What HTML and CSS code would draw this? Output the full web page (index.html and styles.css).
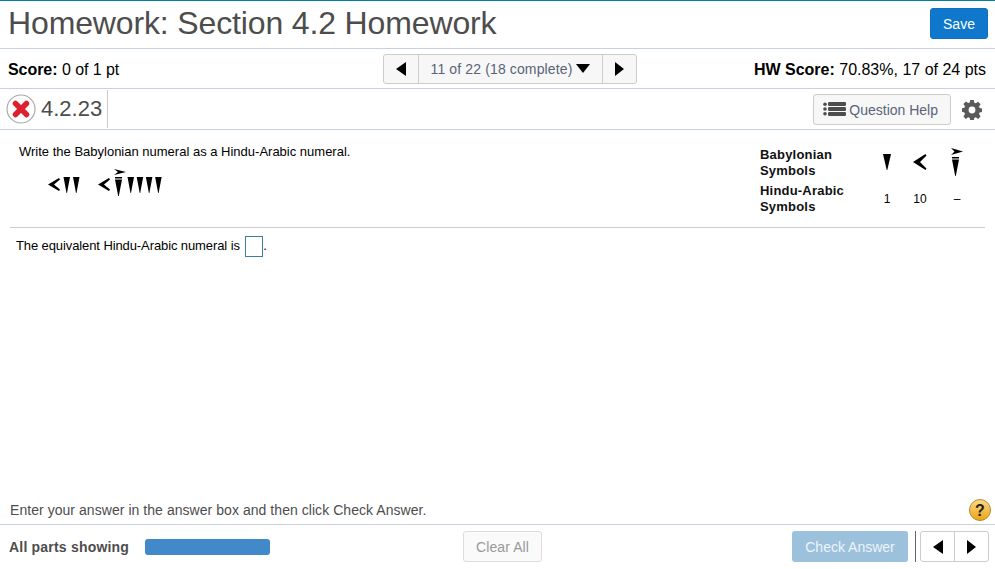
FILE: index.html
```html
<!DOCTYPE html>
<html lang="en">
<head>
<meta charset="utf-8">
<title>Homework: Section 4.2 Homework</title>
<link rel="stylesheet" href="styles.css">
</head>
<body>
<div class="page">
  <header class="title-bar">
    <h1 class="title">Homework: Section 4.2 Homework</h1>
    <button class="btn-save">Save</button>
  </header>
  <div class="score-bar">
    <div class="score"><b>Score:</b> 0 of 1 pt</div>
    <div class="pager">
      <span class="pager-arrow"><svg width="10" height="14" viewBox="0 0 10 14"><path d="M10 0V14L0 7Z"/></svg></span>
      <span class="pager-mid">11 of 22 (18 complete)<svg width="14" height="9" viewBox="0 0 14 9"><path d="M0 0H14L7 9Z"/></svg></span>
      <span class="pager-arrow pager-arrow-next"><svg width="9" height="14" viewBox="0 0 9 14"><path d="M0 0V14L9 7Z"/></svg></span>
    </div>
    <div class="hw-score"><b>HW Score:</b> 70.83%, 17 of 24 pts</div>
  </div>
  <div class="question-bar">
    <div class="q-id">
      <svg width="30" height="30" viewBox="0 0 30 30">
        <circle cx="15" cy="15" r="14" fill="#fff" stroke="#aaa" stroke-width="1.2"/>
        <path d="M9.500 9.500L20.500 20.500M20.500 9.500L9.500 20.500" stroke="#dd2030" stroke-width="5.500" stroke-linecap="round"/>
      </svg>
      <span class="q-num">4.2.23</span>
    </div>
    <div class="q-tools">
      <button class="btn-help">
        <svg width="23" height="14" viewBox="0 0 23 14" fill="#4d4d4d"><circle cx="2" cy="2.200" r="1.800"/><circle cx="2" cy="7" r="1.800"/><circle cx="2" cy="11.800" r="1.800"/><rect x="5" y="0" width="18" height="4" rx="1.200"/><rect x="5" y="5" width="18" height="4" rx="1.200"/><rect x="5" y="10" width="18" height="4" rx="1.200"/></svg>
        <span class="help-label">Question Help</span>
      </button>
      <svg class="gear" width="20" height="20" viewBox="0 0 20 20"><path fill="#5a5a5a" fill-rule="evenodd" d="M8.200 0h3.600l.5 2.700 1.500.6 2.300-1.600 2.500 2.500-1.600 2.300.6 1.500 2.400.5v3.600l-2.400.5-.6 1.500 1.600 2.300-2.500 2.500-2.300-1.600-1.500.6-.5 2.600H8.200l-.5-2.600-1.500-.6-2.300 1.600-2.500-2.500 1.600-2.300-.6-1.500L0 11.800V8.200l2.400-.5.6-1.500L1.400 3.900l2.500-2.500 2.300 1.600 1.500-.6zM10 6.600a3.400 3.400 0 1 0 0 6.800 3.400 3.400 0 0 0 0-6.800z"/></svg>
    </div>
  </div>
  <main class="content">
    <section class="prompt">
      <div class="prompt-left">
        <p class="prompt-text">Write the Babylonian numeral as a Hindu-Arabic numeral.</p>
        <svg class="numeral" width="120" height="31" viewBox="0 0 120 31">
          <defs>
            <path id="one" d="M0 0H6.500L3.500 16H3Z"/>
            <path id="ten" d="M11 0L12 1.500 6 6.500 12 11.500 11 13 0 6.500Z"/>
          </defs>
          <use href="#ten" x="2" y="11"/>
          <use href="#one" x="17.500" y="10"/>
          <use href="#one" x="27" y="10"/>
          <use href="#ten" x="52" y="11"/>
          <path d="M68 2L80 5 68 8 72 5ZM69 10H76V11.500H69ZM69 12.500H76L72.800 29H72.200Z"/>
          <use href="#one" x="81.500" y="10"/>
          <use href="#one" x="90.700" y="10"/>
          <use href="#one" x="99.900" y="10"/>
          <use href="#one" x="109.100" y="10"/>
        </svg>
      </div>
      <div class="legend">
        <div class="legend-label">Babylonian<br>Symbols</div>
        <svg class="glyph" width="8" height="16" viewBox="0 0 8 16"><path d="M0 0H8L4.300 16H3.700Z"/></svg>
        <svg class="glyph" width="14" height="16" viewBox="0 0 14 16"><path d="M12.500 0L13.500 1.500 7 8 13.500 14.500 12.500 16 0 8Z"/></svg>
        <svg class="glyph" width="12" height="28" viewBox="0 0 12 28"><path d="M0 0L12 3.500 0 7 3.500 3.500ZM1 9H8V10.500H1ZM1 11.500H8L4.800 28H4.200Z"/></svg>
        <div class="legend-label">Hindu-Arabic<br>Symbols</div>
        <div class="legend-val">1</div>
        <div class="legend-val">10</div>
        <div class="legend-val">–</div>
      </div>
    </section>
    <p class="answer">The equivalent Hindu-Arabic numeral is <span class="answer-box"></span>.</p>
  </main>
  <div class="hint-bar">
    <span>Enter your answer in the answer box and then click Check Answer.</span>
    <svg width="22" height="22" viewBox="0 0 22 22">
      <defs><linearGradient id="gold" x1="0" y1="0" x2="0" y2="1"><stop offset="0" stop-color="#fbd98a"/><stop offset="1" stop-color="#eca414"/></linearGradient></defs>
      <circle cx="11" cy="11" r="10.500" fill="url(#gold)" stroke="#b98a2a"/>
      <text x="11" y="16.500" text-anchor="middle" class="help-q">?</text>
    </svg>
  </div>
  <footer class="foot">
    <div class="parts"><b>All parts showing</b><span class="progress"></span></div>
    <button class="btn-clear">Clear All</button>
    <div class="foot-right">
      <button class="btn-check">Check Answer</button>
      <span class="foot-sep"></span>
      <div class="mini-pager">
        <span class="mini-arrow"><svg width="10" height="14" viewBox="0 0 10 14"><path d="M10 0V14L0 7Z"/></svg></span>
        <span class="mini-arrow"><svg width="9" height="14" viewBox="0 0 9 14"><path d="M0 0V14L9 7Z"/></svg></span>
      </div>
    </div>
  </footer>
</div>
</body>
</html>
```
FILE: styles.css
```css
* { box-sizing: border-box; }
html, body { margin: 0; padding: 0; }
body { font-family: "Liberation Sans", Arial, sans-serif; color: #000; background: #fff; overflow: hidden; }
button { font-family: inherit; cursor: pointer; }
p { margin: 0; }
.page { width: 995px; height: 569px; display: flex; flex-direction: column; border-top: 1px solid #007fa3; }
.title-bar { height: 48px; display: flex; align-items: center; justify-content: space-between; padding: 0 7px 2px 8px; border-bottom: 1px solid #c9d0e0; flex: none; }
.title { margin: 0 0 2px; font-size: 32px; font-weight: 400; color: #4d4d4d; line-height: 44px; letter-spacing: -.14px; }
.btn-save { width: 58px; height: 31px; border: 1px solid #0f6fb8; border-radius: 3px; background: #0f78cc; color: #fff; font-size: 14px; padding: 0; }
.score-bar { height: 40px; flex: none; display: grid; grid-template-columns: 375px 254px 1fr; align-items: center; padding: 0 9px 0 8px; border-bottom: 1px solid #c9d0e0; font-size: 16px; }
.score { padding-top: 2px; letter-spacing: -.05px; }
.hw-score { padding-top: 2px; text-align: right; }
.pager { display: flex; height: 30px; border: 1px solid #ccc; border-radius: 3px; background: #f7f7f7; }
.pager-arrow { width: 34px; display: flex; align-items: center; justify-content: center; }
.pager-arrow-next { width: 33px; }
.pager-mid { width: 185px; display: flex; align-items: center; justify-content: center; gap: 4px; border-left: 1px solid #ccc; border-right: 1px solid #ccc; font-size: 14px; letter-spacing: .13px; color: #5a6478; }
.question-bar { height: 41px; flex: none; display: flex; align-items: stretch; justify-content: space-between; padding: 0 13px 0 6px; border-bottom: 1px solid #c9d0e0; }
.q-id { display: flex; align-items: center; gap: 5px; padding-right: 5px; border-right: 1px solid #ccc; margin: 1px 0; }
.q-num { font-size: 22px; color: #4d4d4d; }
.q-tools { display: flex; align-items: center; gap: 11px; }
.gear { margin-top: 1px; }
.btn-help { width: 138px; height: 31px; padding: 0 12px 0 9px; display: flex; align-items: center; justify-content: space-between; border: 1px solid #ccc; border-radius: 3px; background: #f7f7f7; font-size: 14px; color: #5a6478; }
.help-label { padding-top: 2px; }
.content { flex: 1; min-height: 0; display: flex; flex-direction: column; padding: 0 10px; }
.prompt { height: 98px; flex: none; display: flex; justify-content: space-between; border-bottom: 1px solid #ccc; }
.prompt-text { font-size: 13px; padding: 14px 0 0 9px; line-height: 16px; }
.numeral { display: block; margin: 7px 0 0 36px; }
.legend { display: grid; grid-template-columns: 111px 32px 34px 40px; grid-auto-rows: 36px; align-items: center; justify-items: center; padding: 15px 8px 0 0; font-size: 12px; height: 97px; }
.legend-label { justify-self: start; font-weight: 700; font-size: 13px; line-height: 16px; letter-spacing: .2px; color: #111; }
.glyph { margin-top: -2px; }
.answer { font-size: 13px; padding: 7px 0 0 6px; line-height: 22px; height: 33px; letter-spacing: -.1px; }
.answer-box { display: inline-block; width: 18px; height: 21px; margin-left: 2px; border: 1px solid #3d7f9a; vertical-align: middle; background: #fff; }
.hint-bar { height: 39px; flex: none; display: flex; align-items: center; justify-content: space-between; padding: 10px 4px 0 10px; font-size: 14px; letter-spacing: .05px; color: #4d4d4d; border-bottom: 1px solid #c9d0e0; }
.help-q { font-family: "Liberation Sans", sans-serif; font-weight: 700; font-size: 16px; fill: #222; }
.foot { height: 44px; flex: none; display: grid; grid-template-columns: 454px 79px 1fr; align-items: center; padding: 0 6px 1px 9px; }
.parts { display: flex; align-items: center; gap: 16px; font-size: 14px; letter-spacing: .2px; color: #4d4d4d; }
.progress { width: 125px; height: 16px; border-radius: 3px; background: #4189c9; }
.btn-clear { width: 79px; height: 31px; border: 1px solid #ddd; border-radius: 3px; background: #fafafa; color: #999; font-size: 14px; letter-spacing: .1px; padding: 0; }
.foot-right { display: flex; align-items: center; justify-content: flex-end; gap: 7px; }
.btn-check { width: 116px; height: 31px; border: 0; border-radius: 3px; background: #9cc1dc; color: #eef4f8; font-size: 14px; padding: 0; }
.foot-sep { width: 1px; height: 31px; background: #666; margin-right: -3px; }
.mini-pager { display: flex; width: 69px; height: 31px; border: 1px solid #ccc; border-radius: 3px; }
.mini-arrow { flex: 1; display: flex; align-items: center; justify-content: center; }
.mini-arrow + .mini-arrow { border-left: 1px solid #ccc; }
```
